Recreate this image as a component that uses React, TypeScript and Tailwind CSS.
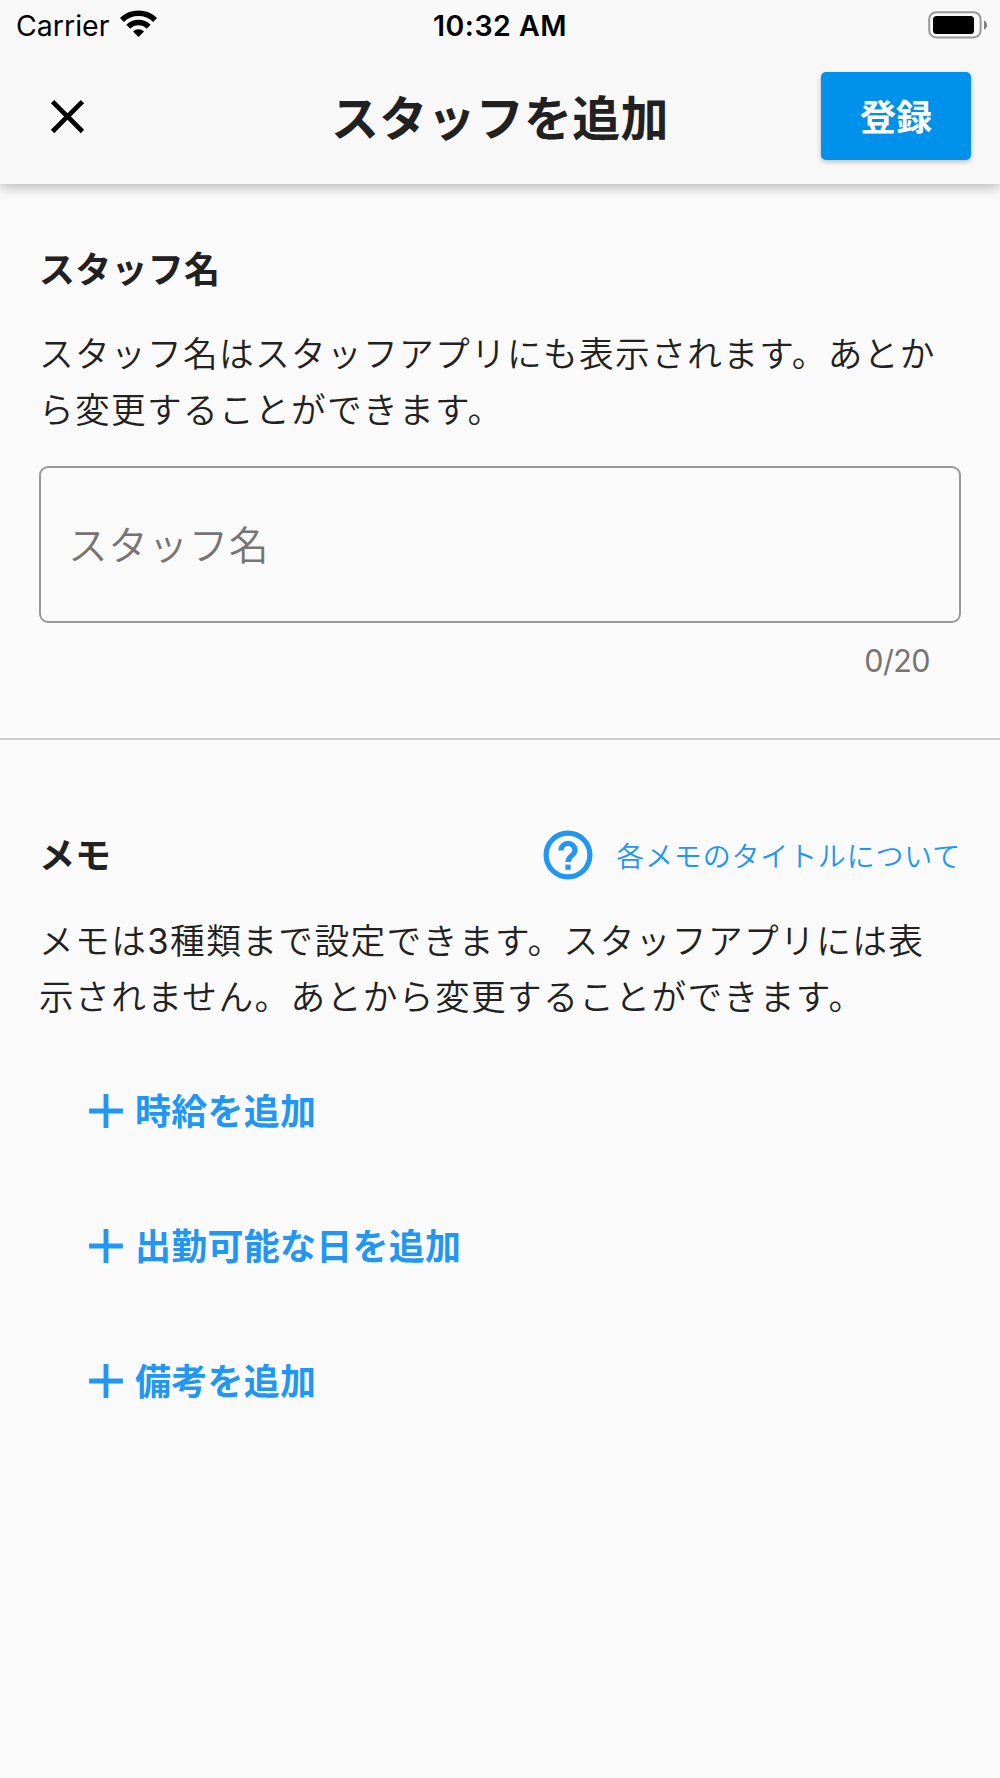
import { MdAdd, MdClose } from "react-icons/md";

const memoTypes = ["時給を追加", "出勤可能な日を追加", "備考を追加"];

function WifiIcon() {
  return (
    <svg className="h-[27px] w-[37px]" viewBox="0 0 37 27" fill="none" stroke="#000" strokeWidth="5.6">
      <path d="M1.9 10a23.8 23.8 0 0 1 33.2 0" />
      <path d="M8.3 16.7a14.6 14.6 0 0 1 20.4 0" />
      <path d="M18.5 27l-5.5-5.4a7.8 7.8 0 0 1 11 0z" fill="#000" stroke="none" />
    </svg>
  );
}

function BatteryIcon() {
  return (
    <svg className="h-[28px] w-[60px]" viewBox="0 0 60 28">
      <rect x="1.2" y="1.2" width="51.4" height="25.2" rx="7" fill="none" stroke="#999" strokeWidth="2" />
      <rect x="5" y="5" width="41" height="18" rx="3.5" />
      <path d="M56 9.2c4 2 4 7.6 0 9.600z" fill="#808080" />
    </svg>
  );
}

function HelpIcon() {
  return (
    <svg className="size-[50px]" viewBox="0 0 50 50" fill="none" stroke="currentColor" strokeWidth="5.2">
      <circle cx="25" cy="25" r="21.9" />
      <path d="M18 20.4a7 7 0 0 1 14 0c0 4.800-7 5.400-7 11.700" />
      <rect x="22.400" y="34.600" width="5.200" height="5.200" fill="currentColor" stroke="none" />
    </svg>
  );
}

function StatusBar() {
  return (
    <div className="grid h-12 grid-cols-[1fr_auto_1fr] items-center pt-[3px] pr-[12px] pl-[16px] text-black">
      <div className="flex items-center">
        <span className="pt-[2px] text-[28.5px] leading-none">Carrier</span>
        <span className="-mt-[4px] ml-[11px]">
          <WifiIcon />
        </span>
      </div>
      <span className="-ml-[4px] pt-[2px] text-[28.5px] leading-none font-semibold tracking-[0.5px]">10:32 AM</span>
      <div className="-mt-[2px] flex justify-end">
        <BatteryIcon />
      </div>
    </div>
  );
}

function Header() {
  return (
    <header className="relative h-[184px] bg-[#f8f8f8] shadow-[0_3px_12px_rgba(0,0,0,0.28)]">
      <StatusBar />
      <div className="grid h-[136px] grid-cols-[150px_1fr_150px] items-center pr-[29px] pl-[39px]">
        <button aria-label="閉じる">
          <MdClose className="size-[57px] text-black" />
        </button>
        <h1 className="-ml-[10px] pt-[5px] text-center text-[48px] leading-none font-bold tracking-[0.25px]">スタッフを追加</h1>
        <button className="h-[88px] w-[150px] rounded-[5px] bg-[#0091ea] pt-[3px] text-[36px] leading-none font-bold text-white shadow-[0_2px_5px_rgba(0,0,0,0.25)]">
          登録
        </button>
      </div>
    </header>
  );
}

function NameSection() {
  return (
    <section className="border-b-2 border-[#ccc] px-[39px] pt-[58px] pb-[59px]">
      <h2 className="text-[36px] leading-[56px] font-bold tracking-[0.25px]">スタッフ名</h2>
      <p className="mt-[29px] text-[34.7px] leading-[55.5px] font-[350] tracking-[1.32px] whitespace-nowrap">
        スタッフ名はスタッフアプリにも表示されます。あとか
        <br />
        ら変更することができます。
      </p>
      <input
        className="mt-[28px] block h-[157px] w-full rounded-[9px] border-2 border-[#999] px-[27px] pt-[2px] text-[39.6px] font-[350] tracking-[0.7px] placeholder:text-[#757575] placeholder:opacity-100"
        placeholder="スタッフ名"
        maxLength={20}
      />
      <div className="mt-[20px] pr-[31px] text-right text-[30.5px] leading-[36px] tracking-[-0.6px] text-[#757575]">0/20</div>
    </section>
  );
}

function MemoSection() {
  return (
    <section className="px-[39px] pt-[87px]">
      <div className="flex h-[56px] items-center justify-between">
        <h2 className="pt-[2px] text-[36px] leading-[56px] font-bold">メモ</h2>
        <a className="flex items-center text-[#2196f3]">
          <HelpIcon />
          <span className="ml-[23px] pt-[3px] text-[28px] leading-none font-[350] tracking-[0.8px]">各メモのタイトルについて</span>
        </a>
      </div>
      <p className="mt-[31px] text-[34.7px] leading-[55.5px] font-[350] tracking-[1.4px] whitespace-nowrap">
        メモは<span className="font-normal">3</span>種類まで設定できます。スタッフアプリには表
        <br />
        示されません。あとから変更することができます。
      </p>
      <ul className="mt-[18px] pl-[38px]">
        {memoTypes.map((label) => (
          <li key={label} className="flex h-[135.3px] items-center text-[#2196f3]">
            <MdAdd className="size-[58px]" />
            <span className="pt-[2px] text-[36px] leading-none font-bold tracking-[0.25px]">{label}</span>
          </li>
        ))}
      </ul>
    </section>
  );
}

export default function App() {
  return (
    <div className="h-[1778px] w-[1000px] overflow-hidden bg-[#fafafa] font-['Inter','Noto_Sans_CJK_JP',sans-serif] text-[#212121]" lang="ja">
      <Header />
      <main>
        <NameSection />
        <MemoSection />
      </main>
    </div>
  );
}
